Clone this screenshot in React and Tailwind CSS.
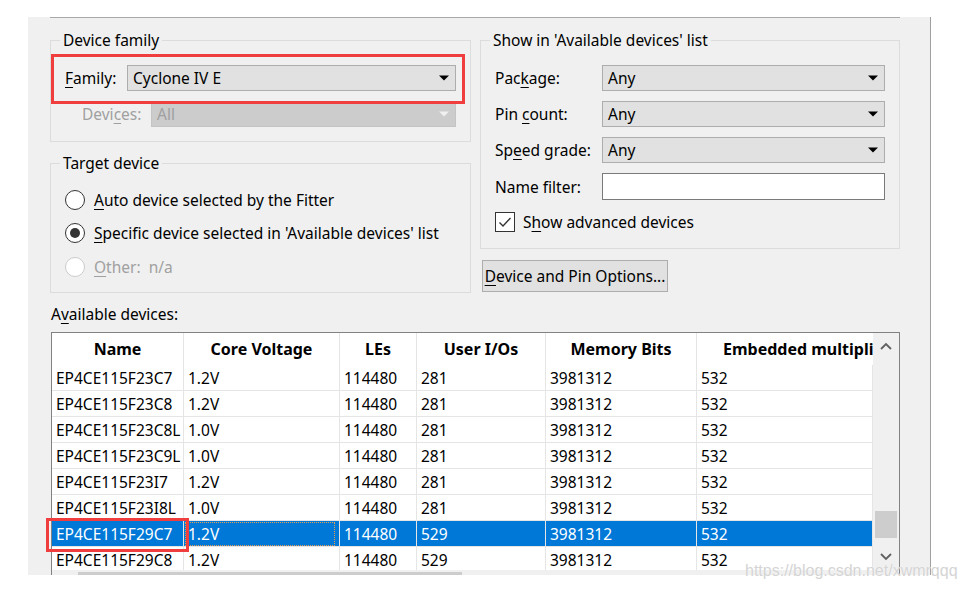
import React from "react";

function Arrow({ disabled }) {
  return (
    <svg width="10" height="6" viewBox="0 0 10 6" className="shrink-0">
      <path d="M0 0.5h10L5 5.5z" fill={disabled ? "#f0f0f0" : "#000000"} />
    </svg>
  );
}

function Combo({ value, disabled, className }) {
  return (
    <div
      className={
        disabled
          ? `flex h-[26px] items-center justify-between border border-[#c4c4c4] bg-[#cccccc] pl-[5px] pr-[6px] text-[#a0a0a0] ${className}`
          : `flex h-[26px] items-center justify-between border border-[#adadad] bg-[#e1e1e1] pl-[5px] pr-[6px] text-black ${className}`
      }
    >
      <span>{value}</span>
      <Arrow disabled={disabled} />
    </div>
  );
}

function Radio({ checked, disabled, children }) {
  return (
    <div className="flex h-[33.5px] items-center">
      <span
        className={
          disabled
            ? "flex h-[20px] w-[20px] shrink-0 items-center justify-center rounded-full border border-[#cccccc] bg-white"
            : "flex h-[20px] w-[20px] shrink-0 items-center justify-center rounded-full border border-[#333333] bg-white"
        }
      >
        {checked && <span className="h-[10px] w-[10px] rounded-full bg-[#333333]" />}
      </span>
      <span className={disabled ? "ml-[9px] whitespace-nowrap text-[#a0a0a0]" : "ml-[9px] whitespace-nowrap"}>{children}</span>
    </div>
  );
}

function U({ children }) {
  return <span className="underline underline-offset-[3px]">{children}</span>;
}

const colW = ["w-[132px]", "w-[156px]", "w-[77px]", "w-[129px]", "w-[151px]", "w-[176px]"];

const headers = ["Name", "Core Voltage", "LEs", "User I/Os", "Memory Bits"];

const rows = [
  ["EP4CE115F23C7", "1.2V", "114480", "281", "3981312", "532"],
  ["EP4CE115F23C8", "1.2V", "114480", "281", "3981312", "532"],
  ["EP4CE115F23C8L", "1.0V", "114480", "281", "3981312", "532"],
  ["EP4CE115F23C9L", "1.0V", "114480", "281", "3981312", "532"],
  ["EP4CE115F23I7", "1.2V", "114480", "281", "3981312", "532"],
  ["EP4CE115F23I8L", "1.0V", "114480", "281", "3981312", "532"],
  ["EP4CE115F29C7", "1.2V", "114480", "529", "3981312", "532"],
  ["EP4CE115F29C8", "1.2V", "114480", "529", "3981312", "532"],
];

function Chevron({ up }) {
  return (
    <svg width="12" height="8" viewBox="0 0 12 8">
      <path
        d={up ? "M1 7L6 2L11 7" : "M1 1L6 6L11 1"}
        fill="none"
        stroke="#606060"
        strokeWidth="1.8"
      />
    </svg>
  );
}

export default function App() {
  return (
    <div className="relative h-[590px] w-[963px] overflow-hidden bg-white font-['Noto_Sans',sans-serif] text-[15.5px] leading-[20px] text-black">
      <div className="ml-[28px] mt-[17px] h-[558px] w-[903px] overflow-hidden border-r border-[#a0a0a0] bg-[#f0f0f0]">
        <div className="ml-[22px] w-[850px] border-t border-[#a8a8a8]">
          <div className="mt-[12px] flex gap-[9px]">
            {/* left column */}
            <div className="flex w-[421px] flex-col">
              <fieldset className="relative border border-[#dcdcdc]">
                <legend className="ml-[9px] px-[3px] leading-[20px]">Device family</legend>
                <div className="pb-[14px] pt-[15px]">
                  <div className="flex items-center pl-[14px]">
                    <span className="w-[62px] whitespace-nowrap">
                      <U>F</U>amily:
                    </span>
                    <Combo value="Cyclone IV E" className="w-[329px]" />
                  </div>
                  <div className="mt-[10px] flex items-center pl-[31px]">
                    <span className="w-[69px] whitespace-nowrap text-[#a0a0a0]">
                      Devi<U>c</U>es:
                    </span>
                    <Combo value="All" disabled className="w-[305px]" />
                  </div>
                </div>
                <div className="pointer-events-none absolute left-[0px] top-[4px] h-[50px] w-[414px] border-[3px] border-[#f03e3e]" />
              </fieldset>
              <fieldset className="mt-[11px] border border-[#dcdcdc]">
                <legend className="ml-[9px] px-[3px] leading-[20px]">Target device</legend>
                <div className="pb-[8.5px] pl-[14px] pt-[10px]">
                  <Radio>
                    <U>A</U>uto device selected by the Fitter
                  </Radio>
                  <Radio checked>
                    <U>S</U>pecific device selected in 'Available devices' list
                  </Radio>
                  <Radio disabled>
                    <U>O</U>ther:&nbsp;&nbsp;n/a
                  </Radio>
                </div>
              </fieldset>
            </div>
            {/* right column */}
            <div className="flex w-[420px] flex-col">
              <fieldset className="border border-[#dcdcdc]">
                <legend className="ml-[9px] px-[3px] leading-[20px]">Show in 'Available devices' list</legend>
                <div className="flex flex-col gap-[10px] pl-[14px] pt-[15px]">
                  <div className="flex items-center">
                    <span className="w-[107px] whitespace-nowrap">
                      Pac<U>k</U>age:
                    </span>
                    <Combo value="Any" className="w-[283px]" />
                  </div>
                  <div className="flex items-center">
                    <span className="w-[107px] whitespace-nowrap">
                      Pin <U>c</U>ount:
                    </span>
                    <Combo value="Any" className="w-[283px]" />
                  </div>
                  <div className="flex items-center">
                    <span className="w-[107px] whitespace-nowrap">
                      Sp<U>e</U>ed grade:
                    </span>
                    <Combo value="Any" className="w-[283px]" />
                  </div>
                  <div className="flex items-center">
                    <span className="w-[107px] whitespace-nowrap">Name filter:</span>
                    <div className="h-[27px] w-[283px] border border-[#7a7a7a] bg-white" />
                  </div>
                </div>
                <div className="mt-[12px] flex items-center pb-[16px] pl-[14px]">
                  <span className="flex h-[20px] w-[20px] items-center justify-center border border-[#333333] bg-white">
                    <svg width="14" height="12" viewBox="0 0 14 12">
                      <path d="M1.5 6.5L5 10L12.5 2" fill="none" stroke="#333333" strokeWidth="1.4" />
                    </svg>
                  </span>
                  <span className="ml-[8px] whitespace-nowrap">
                    S<U>h</U>ow advanced devices
                  </span>
                </div>
              </fieldset>
              <button className="ml-[2px] mt-[11px] flex h-[32px] w-[186px] items-center justify-center border border-[#adadad] bg-[#e1e1e1]">
                <span className="whitespace-nowrap">
                  <U>D</U>evice and Pin Options...
                </span>
              </button>
            </div>
          </div>

          <div className="mt-[11px] pl-[1px] leading-[20px]">
            A<U>v</U>ailable devices:
          </div>

          {/* table */}
          <div className="relative ml-[1px] mt-[8px] w-[849px] border border-[#828282] bg-white">
            <div className="flex">
              <div className="w-[821px]">
                <div className="flex h-[32px] text-[16px] font-bold">
                  {headers.map((h, i) => (
                    <div
                      key={h}
                      className={`${colW[i]} flex shrink-0 items-center justify-center whitespace-nowrap border-r border-[#e5e5e5]`}
                    >
                      {h}
                    </div>
                  ))}
                  <div className="flex w-[176px] shrink-0 items-center overflow-hidden whitespace-nowrap pl-[26px]">
                    Embedded multipliers 9-bit elements
                  </div>
                </div>
                <div className="h-[205px] overflow-hidden">
                  {rows.map((r, ri) => {
                    const sel = ri === 6;
                    return (
                      <div
                        key={ri}
                        className={
                          sel
                            ? "flex h-[26px] border-b border-[#e5e5e5] bg-[#0078d7] text-white"
                            : "flex h-[26px] border-b border-[#e5e5e5]"
                        }
                      >
                        {r.map((c, ci) => (
                          <div
                            key={ci}
                            className={`${colW[ci]} flex shrink-0 items-center whitespace-nowrap border-r border-[#e5e5e5] pl-[4px]`}
                          >
                            {sel && ci === 1 ? (
                              <span className="-ml-[3px] flex h-[24px] w-[150px] items-center border border-dotted border-[#e0a050] pl-[2px]">
                                {c}
                              </span>
                            ) : (
                              c
                            )}
                          </div>
                        ))}
                      </div>
                    );
                  })}
                </div>
              </div>
              {/* vertical scrollbar */}
              <div className="flex w-[26px] flex-col bg-[#f0f0f0]">
                <div className="flex h-[26px] items-center justify-center">
                  <Chevron up />
                </div>
                <div className="flex-1">
                  <div className="mx-[2px] mt-[152px] h-[27px] bg-[#cdcdcd]" />
                </div>
                <div className="flex h-[26px] items-center justify-center">
                  <Chevron />
                </div>
              </div>
            </div>
            {/* horizontal scrollbar */}
            <div className="flex h-[26px] bg-[#f0f0f0]">
              <div className="w-[26px]" />
              <div className="my-[2px] h-[22px] w-[384px] bg-[#cdcdcd]" />
            </div>
            <div className="pointer-events-none absolute left-[-6px] top-[185px] h-[34px] w-[143px] border-[3px] border-[#f03e3e]" />
          </div>
        </div>
      </div>
      <div className="pointer-events-none absolute left-[745px] top-[561px] whitespace-nowrap font-['Liberation_Sans',sans-serif] text-[16px] leading-[20px] text-[#d4d4d4] [text-shadow:0_0_1px_#ffffff]">
        https://blog.csdn.net/xwmrqqq
      </div>
    </div>
  );
}
